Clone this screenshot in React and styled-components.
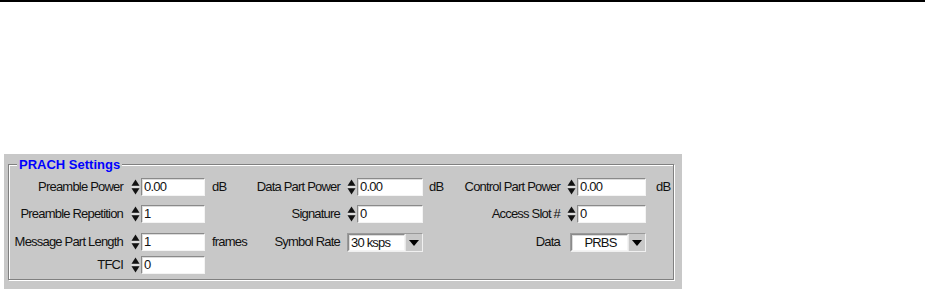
import React from 'react';
import styled, { createGlobalStyle } from 'styled-components';

const GlobalStyle = createGlobalStyle`
  html, body {
    margin: 0;
    padding: 0;
    background: #ffffff;
  }
  body {
    font-family: "Liberation Sans", Arial, sans-serif;
  }
`;

const Page = styled.div`
  width: 925px;
  height: 289px;
  overflow: hidden;
  border-top: 2px solid #000;
  box-sizing: border-box;
`;

const Panel = styled.div`
  margin: 152px 0 0 4px;
  width: 678px;
  height: 140px;
  background: #c8c8c8;
  padding: 3px 0 0 4px;
  box-sizing: border-box;
`;

const Frame = styled.fieldset`
  margin: 0;
  padding: 0 0 0 1px;
  width: 666px;
  height: 123px;
  box-sizing: border-box;
  border: 1px solid #808080;
  box-shadow: 1px 1px 0 #ffffff, inset 1px 1px 0 #ffffff;
`;

const Legend = styled.legend`
  margin-left: 7px;
  padding: 0 2px;
  font-size: 13px;
  line-height: 15px;
  font-weight: bold;
  color: #0000ff;
  background: #c8c8c8;
`;

const Grid = styled.div`
  margin-top: 6px;
  display: grid;
  grid-template-columns: 121px 74px 45px 97px 76px 32px 112px 79px auto;
  grid-template-rows: 27px 28px 23px 18px;
  align-items: start;
  font-size: 13px;
  letter-spacing: -0.8px;
  color: #111;
`;

const Label = styled.div`
  grid-column: ${p => p.$col};
  height: 18px;
  line-height: 18px;
  text-align: right;
  white-space: nowrap;
  padding-right: ${p => p.$pr || 8}px;
`;

const Unit = styled.div`
  grid-column: ${p => p.$col};
  height: 18px;
  line-height: 18px;
  white-space: nowrap;
  padding-left: ${p => p.$pl || 7}px;
`;

const Control = styled.div`
  grid-column: ${p => p.$col};
  display: flex;
  align-items: stretch;
  height: 18px;
`;

const Arrows = styled.svg`
  width: 9px;
  height: 18px;
  margin-right: 1px;
  flex: none;
`;

const Field = styled.div`
  flex: 1;
  box-sizing: border-box;
  background: #ffffff;
  border-style: solid;
  border-width: 1px;
  border-color: #8a8a8a #f4f4f4 #f4f4f4 #8a8a8a;
  box-shadow: inset 1px 1px 0 #dcdcdc;
  padding-left: 2px;
  line-height: 16px;
  text-align: ${p => (p.$center ? 'center' : 'left')};
  white-space: nowrap;
  overflow: hidden;
`;

const Select = styled.div`
  flex: 1;
  display: flex;
  box-sizing: border-box;
  height: 19px;
  border-style: solid;
  border-width: 1px;
  border-color: #9a9a9a #f0f0f0 #f0f0f0 #9a9a9a;
  margin-left: ${p => p.$ml || 0}px;
`;

const SelectButton = styled.div`
  width: 16px;
  flex: none;
  display: flex;
  align-items: center;
  justify-content: center;
  background: #c8c8c8;
  border-left: 1px solid #e8e8e8;
`;

const Caret = styled.svg`
  width: 10px;
  height: 6px;
`;

function SpinArrows() {
  return (
    <Arrows viewBox="0 0 9 18">
      <polygon points="0.5,7.8 4.5,1.5 8.5,7.8" fill="#111" />
      <rect x="0.5" y="8.5" width="8" height="1" fill="#f2f2f2" />
      <polygon points="0.5,10.2 8.5,10.2 4.5,16.5" fill="#111" />
    </Arrows>
  );
}

function Spin({ col, value }) {
  return (
    <Control $col={col}>
      <SpinArrows />
      <Field>{value}</Field>
    </Control>
  );
}

function Dropdown({ col, value, center, ml }) {
  return (
    <Control $col={col}>
      <Select $ml={ml}>
        <Field $center={center}>{value}</Field>
        <SelectButton>
          <Caret viewBox="0 0 10 6">
            <polygon points="0,0 10,0 5,6" fill="#000" />
          </Caret>
        </SelectButton>
      </Select>
    </Control>
  );
}

export default function App() {
  return (
    <>
      <GlobalStyle />
      <Page>
        <Panel>
          <Frame>
            <Legend>PRACH Settings</Legend>
            <Grid>
              <Label $col={1}>Preamble Power</Label>
              <Spin col={2} value="0.00" />
              <Unit $col={3}>dB</Unit>
              <Label $col={4} $pr={7}>Data Part Power</Label>
              <Spin col={5} value="0.00" />
              <Unit $col={6} $pl={6}>dB</Unit>
              <Label $col={7} $pr={7}>Control Part Power</Label>
              <Spin col={8} value="0.00" />
              <Unit $col={9} $pl={10}>dB</Unit>

              <Label $col={1}>Preamble Repetition</Label>
              <Spin col={2} value="1" />
              <Label $col={4} $pr={7}>Signature</Label>
              <Spin col={5} value="0" />
              <Label $col={7} $pr={7}>Access Slot #</Label>
              <Spin col={8} value="0" />

              <Label $col={1}>Message Part Length</Label>
              <Spin col={2} value="1" />
              <Unit $col={3}>frames</Unit>
              <Label $col={4} $pr={7}>Symbol Rate</Label>
              <Dropdown col={5} value="30 ksps" />
              <Label $col={7} $pr={7}>Data</Label>
              <Dropdown col={8} value="PRBS" center ml={3} />

              <Label $col={1}>TFCI</Label>
              <Spin col={2} value="0" />
            </Grid>
          </Frame>
        </Panel>
      </Page>
    </>
  );
}
